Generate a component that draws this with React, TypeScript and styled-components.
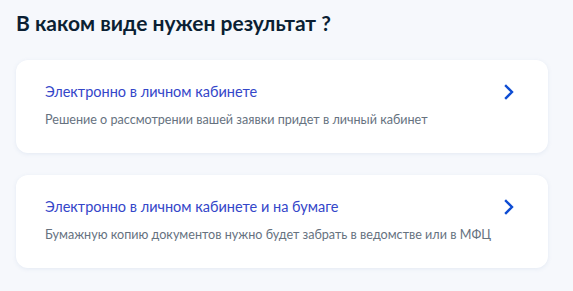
import React from "react";
import styled, { createGlobalStyle } from "styled-components";

const GlobalStyle = createGlobalStyle`
  html, body {
    margin: 0;
    padding: 0;
    background: #f6f8fc;
  }
  body {
    font-family: Lato, "Noto Sans", sans-serif;
  }
`;

const Page = styled.div`
  width: 573px;
  height: 291px;
  box-sizing: border-box;
  padding: 9px 25px 0 16px;
  background: #f6f8fc;
  overflow: hidden;
`;

const Heading = styled.h1`
  margin: 0 0 23px;
  font-size: 21px;
  line-height: 28px;
  font-weight: 700;
  color: #0b1f33;
`;

const List = styled.div`
  display: flex;
  flex-direction: column;
  gap: 22px;
`;

const Card = styled.button`
  display: flex;
  align-items: flex-start;
  justify-content: space-between;
  width: 100%;
  height: 93px;
  box-sizing: border-box;
  padding: 22px 34px 0 29px;
  border: none;
  border-radius: 12px;
  background: #ffffff;
  box-shadow: 0 1px 4px rgba(102, 130, 180, 0.12);
  text-align: left;
  font-family: inherit;
  cursor: pointer;
`;

const Texts = styled.div`
  display: flex;
  flex-direction: column;
  gap: 9px;
  flex: 1;
  min-width: 0;
  white-space: nowrap;
`;

const Title = styled.span`
  font-size: 14.5px;
  line-height: 20px;
  color: #3446c9;
`;

const Desc = styled.span`
  font-size: 12.6px;
  line-height: 18px;
  color: #66727f;
`;

const Arrow = styled.svg`
  flex: 0 0 auto;
  margin-top: 2px;
`;

const Chevron = () => (
  <Arrow width="10" height="16" viewBox="0 0 10 16">
    <path d="M2 2 L8 8 L2 14" fill="none" stroke="#0d4cd3" strokeWidth="2.4" strokeLinecap="square" />
  </Arrow>
);

const options = [
  {
    title: "Электронно в личном кабинете",
    desc: "Решение о рассмотрении вашей заявки придет в личный кабинет",
  },
  {
    title: "Электронно в личном кабинете и на бумаге",
    desc: "Бумажную копию документов нужно будет забрать в ведомстве или в МФЦ",
  },
];

export default function App() {
  return (
    <>
      <GlobalStyle />
      <Page>
        <Heading>В каком виде нужен результат ?</Heading>
        <List>
          {options.map((o) => (
            <Card key={o.title}>
              <Texts>
                <Title>{o.title}</Title>
                <Desc>{o.desc}</Desc>
              </Texts>
              <Chevron />
            </Card>
          ))}
        </List>
      </Page>
    </>
  );
}
